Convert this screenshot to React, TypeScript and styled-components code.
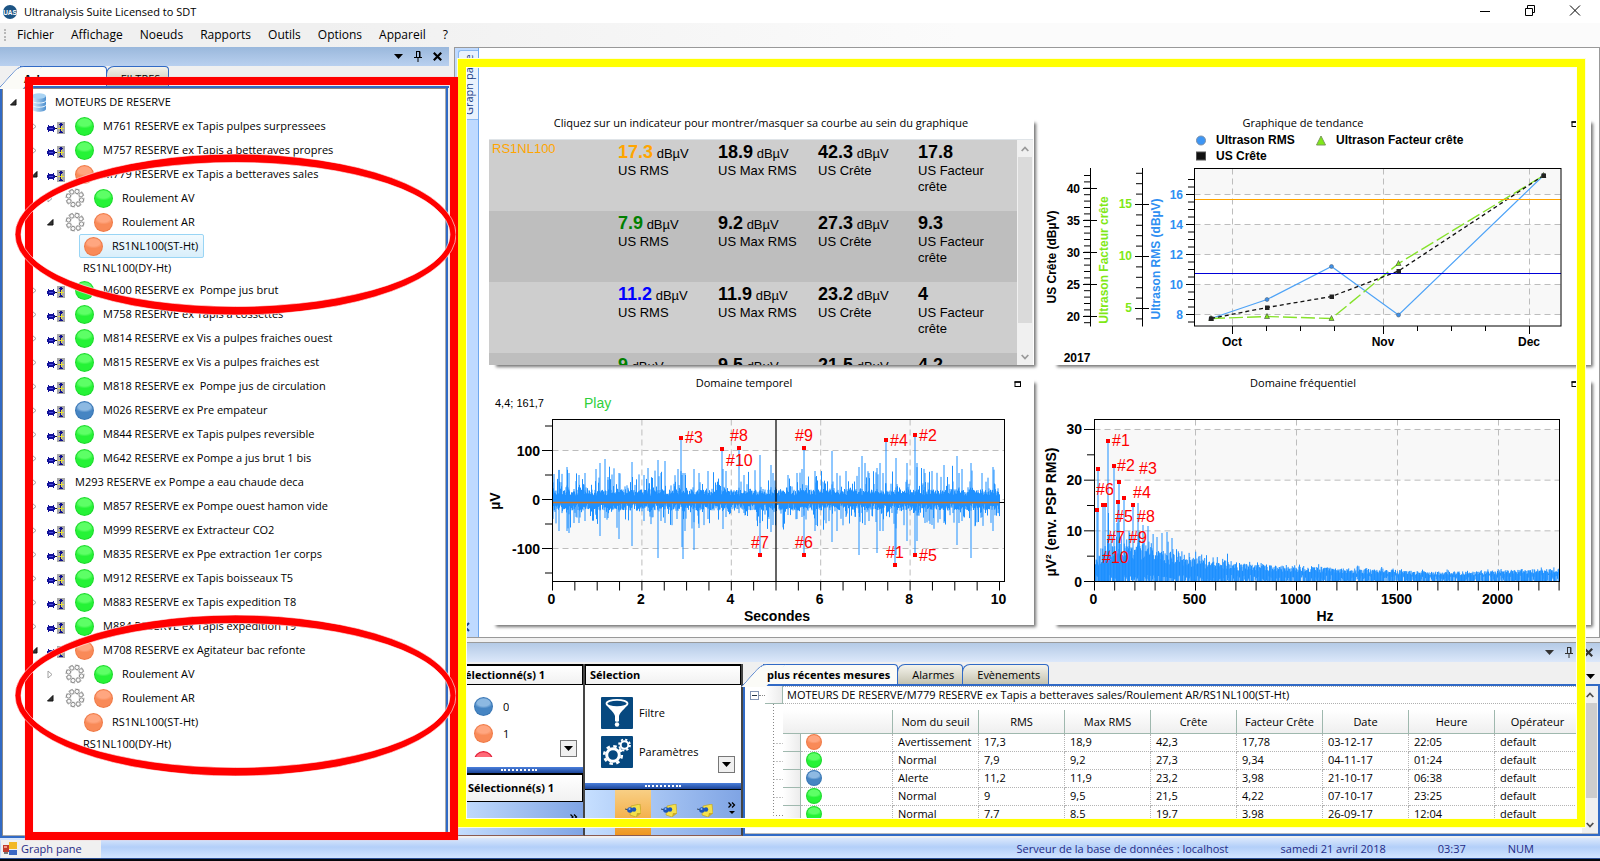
import React from "react";
import styled, { createGlobalStyle, css } from "styled-components";

const UI = '"Open Sans", "Noto Sans", Tahoma, sans-serif';
const ARIAL = '"Liberation Sans", Arial, sans-serif';
const BLUE = "#316ac5";

const Global = createGlobalStyle`
  * { box-sizing: border-box; }
  body { margin: 0; background: #f0f0f0; color: #000; font: 11px/16px ${UI}; }
  button { font: inherit; color: inherit; background: none; border: 0; padding: 0; margin: 0; text-align: left; }
  ul { list-style: none; margin: 0; padding: 0; }
  h2 { margin: 0; font-size: 11px; }
  svg { display: block; flex: none; }
`;

/* ---------- window chrome ---------- */

const Window = styled.div`
  min-height: 100vh;
  display: flex;
  flex-direction: column;
  overflow: hidden;
  border-bottom: 2px solid #05070c;
`;

const TitleBar = styled.header`
  height: 23px;
  display: flex;
  align-items: center;
  gap: 7px;
  padding: 0 19px 0 3px;
  background: #fff;
`;

const WindowButtons = styled.div`
  margin-left: auto;
  display: flex;
  gap: 33px;
  padding-bottom: 2px;
`;

const MenuBar = styled.nav`
  height: 24px;
  display: flex;
  align-items: center;
  gap: 17px;
  padding-left: 4px;
  font-size: 12px;
  background: linear-gradient(90deg, #f0f0f0 20%, #fbfbfb 60%);
`;

const Grip = styled.span`
  height: 12px;
  margin-right: -6px;
  border-left: 2px dotted #b8b8b8;
`;

const Workspace = styled.div`
  position: relative;
  flex: 1;
  display: flex;
  gap: 5px;
`;

const DockHeader = styled.div<{ $tall?: boolean }>`
  height: ${(p) => (p.$tall ? 20 : 19)}px;
  flex: none;
  display: flex;
  align-items: center;
  justify-content: flex-end;
  gap: 11px;
  padding-right: 7px;
  background: linear-gradient(#9ab8dc, #b9d0ef);
  ${(p) => p.$tall && css`
    color: #333;
    border-top: 1px solid #9a9a9a;
    background: linear-gradient(#b4cae6, #dce8fa);
  `}
`;

const Tabs = styled.div`
  flex: none;
  display: flex;
  align-items: flex-end;
  height: 22px;
  border-bottom: 2px solid ${BLUE};
  background: #f0f0f0;
`;

const DockTabs = styled(Tabs)`
  line-height: 22px;
`;

const Tab = styled.button<{ $active?: boolean }>`
  position: relative;
  height: 20px;
  padding: 1px 8px 0 14px;
  border: 1px solid ${BLUE};
  border-left-width: ${(p) => (p.$active ? 0 : 1)}px;
  border-bottom: 0;
  border-radius: 8px 4px 0 0;
  margin-left: -1px;
  white-space: nowrap;
  background: linear-gradient(#f4f3ec, #c5c3b0);
  ${(p) => p.$active && css`
    z-index: 1;
    font-weight: bold;
    margin-left: 20px;
    padding: 1px 7px 0 4px;
    border-radius: 0 4px 0 0;
    background: #fbfbf7;
    &::before {
      content: "";
      position: absolute;
      z-index: -1;
      top: -1px;
      left: -12px;
      width: 24px;
      height: 22px;
      border: solid ${BLUE};
      border-width: 1px 0 0 1px;
      border-radius: 6px 0 0 0;
      background: #fbfbf7;
      transform: skewX(-42deg);
    }
  `}
`;

/* ---------- left dock ---------- */

const LeftDock = styled.aside`
  position: relative;
  width: 449px;
  flex: none;
  display: flex;
  flex-direction: column;
`;

const TreePanel = styled.div`
  flex: 1;
  margin-right: 1px;
  border: solid ${BLUE};
  border-width: 0 2px 2px;
  background: #fff;
  box-shadow: inset 1px 1px 0 #888, inset -1px -1px 0 #aaa;
`;

const Tree = styled.ul`
  padding: 2px 1px 0 1px;
`;

type Kind = "root" | "machine" | "part" | "point" | "plain";
const indent: Record<Kind, number> = { root: 7, machine: 28, part: 44, point: 76, plain: 80 };

const TreeRow = styled.li<{ $kind: Kind }>`
  display: flex;
  align-items: center;
  gap: 9px;
  height: ${(p) => (p.$kind === "plain" ? 20 : 24)}px;
  padding-left: ${(p) => indent[p.$kind]}px;
  white-space: pre;
`;

const Toggle = styled.button<{ $wide?: number }>`
  width: ${(p) => p.$wide ?? 7}px;
  height: 10px;
`;

const PointItem = styled.span<{ $selected?: boolean }>`
  display: flex;
  align-items: center;
  gap: 9px;
  height: 24px;
  padding: 0 5px 0 4px;
  border: 1px solid transparent;
  border-radius: 2px;
  ${(p) => p.$selected && css`
    border-color: #99d5f5;
    background: linear-gradient(#f2fafe, #d9effb);
  `}
`;

type Tone = "green" | "orange" | "blue" | "red";
const tones: Record<Tone, [string, string, string]> = {
  green: ["#5dff66", "#25f336", "#1fd52e"],
  orange: ["#ffa680", "#f98a58", "#ee7a48"],
  blue: ["#8db9e2", "#4685c3", "#3a76b3"],
  red: ["#ff6a78", "#f5233e", "#d91a34"],
};

const Dot = styled.i<{ $tone: Tone; $size?: number }>`
  flex: none;
  display: block;
  width: ${(p) => p.$size ?? 19}px;
  height: ${(p) => p.$size ?? 19}px;
  border-radius: 50%;
  background: radial-gradient(ellipse 52% 30% at 50% 30%, ${(p) => tones[p.$tone][0]} 60%, transparent 100%),
    ${(p) => tones[p.$tone][1]};
  box-shadow: inset 0 0 0 1px ${(p) => tones[p.$tone][2]};
`;

/* ---------- main column ---------- */

const Main = styled.main`
  flex: 1;
  min-width: 0;
  display: flex;
  flex-direction: column;
  gap: 4px;
`;

const GraphPane = styled.section`
  flex: 1;
  display: flex;
  border: 1px solid #999;
  background: #fff;
`;

const SideStrip = styled.div`
  width: 24px;
  flex: none;
  display: flex;
  flex-direction: column;
  justify-content: space-between;
  align-items: flex-end;
  padding: 2px 0 4px;
  border-right: 1px solid #6fa8ee;
  background: #bfdaff;
`;

const SideTab = styled.button`
  width: 20px;
  height: 70px;
  border: 1px solid #8ab8f0;
  border-left: 0;
  border-radius: 0 3px 3px 0;
  background: #eaf2fd;
  color: #1b3f86;
  line-height: 18px;
  white-space: nowrap;
  writing-mode: vertical-rl;
  transform: rotate(180deg);
  text-align: center;
`;

const Collapse = styled.button`
  width: 15px;
  height: 12px;
  color: #15428b;
`;

const Cards = styled.div`
  flex: 1;
  min-width: 0;
  display: grid;
  grid-template-columns: minmax(0, 546fr) minmax(0, 542fr);
  align-content: start;
  gap: 10px 15px;
  padding: 67px 8px 12px 9px;
`;

const Card = styled.article`
  display: flex;
  flex-direction: column;
  min-width: 0;
  background: #fff;
  box-shadow: 5px 5px 3px -3px rgba(0, 0, 0, 0.55);
`;

const CardTitle = styled.header<{ $restorable?: boolean }>`
  position: relative;
  height: 18px;
  line-height: 16px;
  padding-right: ${(p) => (p.$restorable ? 34 : 0)}px;
  text-align: center;
  button { position: absolute; right: 12px; top: 6px; }
`;

const CardTools = styled.div`
  height: 20px;
  display: flex;
  align-items: center;
  gap: 40px;
  padding-left: 7px;
  font: 11px ${ARIAL};
`;

const PlayButton = styled.button`
  font-size: 14px;
  line-height: 18px;
  color: #2fcf3a;
`;

const Plot = styled.svg`
  width: 100%;
  height: auto;
  overflow: visible;
  font-family: ${ARIAL};
`;

const Indicators = styled.div`
  display: flex;
  height: 226px;
  margin: 6px 1px 0;
  border-top: 1px solid #dfe4e8;
  font: 13px/16px ${ARIAL};
`;

const IndicatorRows = styled.div`
  flex: 1;
  overflow: hidden;
`;

const IndicatorRow = styled.div<{ $shade: boolean }>`
  display: grid;
  grid-template-columns: 126px repeat(4, 100px);
  align-items: start;
  height: 71px;
  padding: 1px 3px 0;
  background: ${(p) => (p.$shade ? "#bebebe" : "#cecece")};
`;

const PointName = styled.span`
  color: #ffa500;
`;

const Indicator = styled.button<{ $color?: string }>`
  width: 84px;
  b { font-size: 18px; line-height: 22px; color: ${(p) => p.$color ?? "#000"}; }
  span { display: block; }
`;

const ScrollBar = styled.div<{ $dark?: boolean }>`
  flex: none;
  width: 16px;
  display: flex;
  flex-direction: column;
  color: ${(p) => (p.$dark ? "#505050" : "#9a9a9a")};
  background: #f0f0f0;
`;

const ScrollArrow = styled.button`
  height: 17px;
  display: grid;
  place-items: center;
`;

const ScrollTrack = styled.div`
  flex: 1;
`;

const ScrollThumb = styled.div<{ $height: string; $dark?: boolean }>`
  height: ${(p) => p.$height};
  margin: 0 1px;
  background: ${(p) => (p.$dark ? "#cdcdcd" : "#dadada")};
`;

/* ---------- bottom dock ---------- */

const BottomDock = styled.section`
  flex: none;
`;

const DockBody = styled.div`
  display: flex;
  height: 172px;
  margin: 2px 0;
`;

const NavPanel = styled.div<{ $width: number }>`
  width: ${(p) => p.$width}px;
  flex: none;
  display: flex;
  flex-direction: column;
  overflow: hidden;
  border-right: 2px solid #454545;
  border-bottom: 1px solid #8a5a50;
`;

const NavTitle = styled.h2<{ $tall?: boolean }>`
  height: ${(p) => (p.$tall ? 28 : 21)}px;
  line-height: ${(p) => (p.$tall ? 26 : 18)}px;
  flex: none;
  padding-left: ${(p) => (p.$tall ? 13 : 4)}px;
  border: 1px solid #000;
  border-top-width: ${(p) => (p.$tall ? 1 : 2)}px;
  font-weight: bold;
  white-space: nowrap;
  background: linear-gradient(#fff, #f1f1f1);
`;

const NavBody = styled.div<{ $height: number }>`
  height: ${(p) => p.$height}px;
  flex: none;
  display: flex;
  justify-content: space-between;
  align-items: flex-end;
  overflow: hidden;
  background: #fff;
`;

const CountList = styled.ul`
  align-self: flex-start;
  height: 72px;
  overflow: hidden;
  padding: 12px 0 0 20px;
  li { display: flex; align-items: center; gap: 10px; height: 19px; margin-bottom: 8px; }
`;

const ActionList = styled.ul`
  align-self: flex-start;
  padding: 12px 0 0 16px;
  li { margin-bottom: 7px; }
  button { display: flex; align-items: center; gap: 6px; }
`;

const MoreButton = styled.button`
  width: 17px;
  height: 17px;
  margin: 0 6px 10px 0;
  display: grid;
  place-items: center;
  border: 1px solid #777;
  background: #f0f0f0;
`;

const Splitter = styled.div`
  height: 7px;
  flex: none;
  display: grid;
  place-items: center;
  background: linear-gradient(#4a7fdc, #1d4598);
  border-bottom: 1px solid #000;
  &::after { content: ""; width: 36px; border-top: 2px dotted #fff; }
`;

const NavBar = styled.div`
  flex: 1;
  display: flex;
  align-items: stretch;
  justify-content: flex-end;
  background: linear-gradient(90deg, #c6dfff, #7fa4e4);
`;

const NavIcon = styled.button<{ $on?: boolean }>`
  width: 36px;
  display: flex;
  align-items: flex-start;
  padding: 14px 0 0 10px;
  ${(p) => p.$on && css`background: linear-gradient(#f8cf85, #f4b04a 65%, #ee9620);`}
`;

const NavMore = styled.button`
  width: 18px;
  display: flex;
  align-items: flex-start;
  padding: 12px 0 0 5px;
`;

const MeasurePane = styled.div`
  flex: 1;
  min-width: 0;
  display: flex;
  flex-direction: column;
  border: solid ${BLUE};
  border-width: 0 2px 2px;
  box-shadow: inset 1px 0 0 #aaa;
`;

const MeasureTabs = styled(Tabs)`
  margin: 0 -2px;
`;

const TabsMenu = styled.button`
  align-self: center;
  margin: 4px 5px 0 auto;
`;

const MeasureBody = styled.div`
  flex: 1;
  display: flex;
  background: #fff;
  border-bottom: 1px solid #bbb;
`;

const MeasureScroll = styled.div`
  flex: 1;
  overflow: hidden;
`;

const GroupRow = styled.div`
  display: flex;
  align-items: center;
  height: 18px;
  margin-left: 5px;
  white-space: nowrap;
`;

const GroupCollapse = styled.button`
  width: 9px;
  height: 9px;
  display: grid;
  place-items: center;
  border: 1px solid #8496b5;
  &::after { content: ""; width: 5px; border-top: 1px solid #234; }
`;

const Joint = styled.span`
  width: 6px;
  border-top: 1px dotted #888;
`;

const HeadCell = styled.span`
  width: 18px;
  height: 18px;
  background: linear-gradient(90deg, #fff, #ececec);
  border: solid #9fb8ae;
  border-width: 0 1px 1px 0;
`;

const GroupLabel = styled.span`
  flex: 1;
  padding-left: 4px;
  border: dotted #b0b0b0;
  border-width: 1px 0;
`;

const TableRow = styled.div`
  display: flex;
  align-items: flex-start;
  svg { margin-left: 28px; }
`;

const Table = styled.table`
  table-layout: fixed;
  width: 798px;
  margin-top: 6px;
  border-spacing: 0;
  th {
    height: 24px;
    padding: 0;
    font-weight: normal;
    border: solid #9fb8ae;
    border-width: 0 1px 1px 0;
    background: linear-gradient(#fff, #efefef);
  }
  td {
    height: 18px;
    line-height: 16px;
    padding: 0 0 1px 5px;
    border: dotted #b4b4b4;
    border-width: 0 1px 1px 0;
    overflow: hidden;
    white-space: nowrap;
  }
  td:first-child {
    border: solid #9fb8ae;
    border-width: 0 1px 1px 0;
    background: linear-gradient(90deg, #fff, #ececec);
  }
`;

/* ---------- status bar ---------- */

const StatusBar = styled.footer`
  height: 21px;
  display: flex;
  align-items: center;
  padding-top: 1px;
  color: #1f2a86;
  background: linear-gradient(#dbe8fc, #b3cff9 45%, #d2e4ff);
  border-bottom: 1px solid #2c4f96;
`;

const StatusButton = styled.button`
  width: 100px;
  height: 18px;
  margin-left: 1px;
  padding-left: 2px;
  display: flex;
  align-items: center;
  gap: 4px;
  background: #f0f0f0;
`;

const StatusInfo = styled.div`
  margin-left: auto;
  display: flex;
  white-space: nowrap;
  gap: 52px;
  padding-right: 66px;
  span:last-child { margin-left: -10px; }
`;

/* ---------- marker overlays ---------- */

const RedFrame = styled.div`
  position: absolute;
  z-index: 3;
  inset: 30px -9px -2px 25px;
  border: 8px solid #f00;
  box-shadow: 0 0 1px #faa, inset 0 0 1px #faa;
  pointer-events: none;
`;

const YellowFrame = styled.div`
  position: absolute;
  z-index: 2;
  inset: 12px 15px 11px 458px;
  border: 8px solid #ff0;
  outline: 1px solid #ffffd8;
  box-shadow: inset 0 0 0 1px #fffff0;
  pointer-events: none;
`;

const Ring = styled.svg<{ $top: number }>`
  position: absolute;
  z-index: 3;
  left: 15px;
  top: ${(p) => p.$top}px;
  pointer-events: none;
`;

function RedRing({ top }: { top: number }) {
  return (
    <Ring $top={top} width="441" height="161" viewBox="0 0 441 161">
      <path
        fill="#f00"
        stroke="#fff"
        strokeOpacity=".6"
        fillRule="evenodd"
        d="M0 80.500a220.500 80.500 0 1 0 441 0a220.500 80.500 0 1 0 -441 0zM6 80.500a214.500 72 0 1 1 429 0a214.500 72 0 1 1 -429 0z"
      />
    </Ring>
  );
}

/* ---------- icons ---------- */

const CaretDown = () => (
  <svg width="9" height="5" viewBox="0 0 9 5"><path d="M0 0h9L4.500 5z" fill="currentColor" /></svg>
);
const Pin = () => (
  <svg width="8" height="11" viewBox="0 0 8 11" fill="none" stroke="currentColor">
    <path d="M2 .5h4v5.500M2.500 .5V6M0 6.500h8M4 7v4" /><path d="M5.500 1v5" />
  </svg>
);
const Cross = () => (
  <svg width="9" height="9" viewBox="0 0 9 9" stroke="currentColor" strokeWidth="2.200"><path d="M.8.8l7.400 7.400M8.200.8L.8 8.200" /></svg>
);
const Chevron = ({ up }: { up?: boolean }) => (
  <svg width="8" height="6" viewBox="0 0 8 6" fill="none" stroke="currentColor" strokeWidth="1.800">
    <path d={up ? "M.7 5L4 1.500 7.300 5" : "M.7 1L4 4.500 7.300 1"} />
  </svg>
);
const Expanded = () => (
  <svg width="7" height="7" viewBox="0 0 7 7"><path d="M6 .5V6H.5z" fill="#333" stroke="#111" /></svg>
);
const Collapsed = () => (
  <svg width="6" height="9" viewBox="0 0 6 9"><path d="M1 1l4 3.500L1 8z" fill="#fff" stroke="#a0a0a0" /></svg>
);
const Logo = () => (
  <svg width="14" height="14" viewBox="0 0 14 14">
    <circle cx="7" cy="7" r="7" fill="#1d5484" />
    <text x="7" y="9.500" textAnchor="middle" fontSize="6.500" fontWeight="bold" fontFamily="Liberation Sans" fill="#fff">UAS</text>
  </svg>
);
const Database = () => (
  <svg width="14" height="19" viewBox="0 0 14 19">
    <defs>
      <linearGradient id="db"><stop offset="0" stopColor="#d9edfb" /><stop offset="1" stopColor="#4c8fcf" /></linearGradient>
    </defs>
    <path d="M0 3v13c0 1.600 3 2.700 7 2.700s7-1.100 7-2.700V3z" fill="url(#db)" />
    <ellipse cx="7" cy="3" rx="7" ry="2.800" fill="#a9d3f3" />
    <path d="M0 7.500c0 1.500 3 2.500 7 2.500s7-1 7-2.500M0 11.700c0 1.500 3 2.500 7 2.500s7-1 7-2.500" fill="none" stroke="#f0f8ff" />
  </svg>
);
const Motor = () => (
  <svg width="19" height="16" viewBox="0 0 19 16" shapeRendering="crispEdges">
    <path d="M1 7h1v1h4v-1h1v7h-1v-1h-4v1h-1zM0 9h8v3H0z" fill="#12129a" />
    <path d="M2 10h4" stroke="#4a4ae0" />
    <path d="M8 10.500h3" stroke="#111" />
    <rect x="10" y="4" width="8" height="12" fill="#a9a9a9" />
    <path d="M14 5v10" stroke="#11118c" strokeWidth="2" />
    <path d="M12 6h4M12 14h4" stroke="#11118c" />
    <path d="M11 10.500h6M14 8v5" stroke="#e8e03a" />
  </svg>
);
const Bearing = () => (
  <svg width="20" height="20" viewBox="0 0 20 20" fill="none">
    <circle cx="10" cy="10" r="9" stroke="#b5b5b5" strokeWidth="1.200" strokeDasharray="5 2" />
    <circle cx="10" cy="10" r="4.400" stroke="#c8c8c8" strokeDasharray="2.500 1" />
    {Array.from({ length: 8 }, (_, i) => {
      const a = (i * Math.PI) / 4 + 0.3;
      return <circle key={i} cx={10 + 6.8 * Math.cos(a)} cy={10 + 6.8 * Math.sin(a)} r="2.100" fill="#fafafa" stroke="#8c8c8c" />;
    })}
  </svg>
);
const Funnel = () => (
  <svg width="32" height="32" viewBox="0 0 32 32">
    <rect width="32" height="32" rx="1" fill="#06487f" />
    <path d="M5 6c0 4 8 8 9 13v5c0 1 4 1 4 0v-5c1-5 9-9 9-13z" fill="#fff" />
    <ellipse cx="16" cy="6.500" rx="10.500" ry="3.700" fill="#06487f" stroke="#fff" strokeWidth="1.800" />
    <circle cx="16" cy="27.500" r="2.200" fill="#fff" />
  </svg>
);
const Gears = () => (
  <svg width="32" height="32" viewBox="0 0 32 32" fill="none" stroke="#fff">
    <rect width="32" height="32" rx="1" fill="#06487f" stroke="none" />
    <circle cx="12" cy="19" r="6.300" strokeWidth="3" />
    <circle cx="12" cy="19" r="8.800" strokeWidth="2.600" strokeDasharray="3.500 3.410" />
    <circle cx="23.500" cy="9" r="3.800" strokeWidth="2" />
    <circle cx="23.500" cy="9" r="5.500" strokeWidth="1.800" strokeDasharray="2.200 2.120" />
  </svg>
);
const NotePin = () => (
  <svg width="16" height="13" viewBox="0 0 16 13">
    <path d="M6 2l9-2 1 9-5 4-6-2z" fill="#f4e04a" stroke="#b79a1e" strokeWidth=".6" />
    <path d="M11 13l1-4 4 0z" fill="#c9a92a" />
    <path d="M0 5l4 1" stroke="#345" />
    <circle cx="5" cy="6" r="2.800" fill="#1c55b8" /><circle cx="9" cy="5.500" r="2.200" fill="#1c55b8" />
    <circle cx="4.500" cy="5" r="1" fill="#8fb9ef" />
  </svg>
);
const DoubleChevron = ({ menu }: { menu?: boolean }) => (
  <svg width="8" height="12" viewBox="0 0 8 12" fill="none" stroke="#000" strokeWidth="1.300">
    <path d="M.5 .5l2.500 2.500-2.500 2.500M4 .5l2.500 2.500L4 5.500" />
    {menu && <path d="M1 9h6L4 12z" fill="#000" stroke="none" />}
  </svg>
);
const Restore = () => (
  <svg width="8" height="6" viewBox="0 0 8 6" fill="none" stroke="#000">
    <rect x="1" y="1" width="5.500" height="4.500" /><path d="M.5 1h6.500" strokeWidth="1.500" />
  </svg>
);
const GraphIcon = () => (
  <svg width="14" height="13" viewBox="0 0 14 13">
    <rect x="0" y="3" width="6" height="7" fill="#c23a2c" /><rect x="1" y="4" width="3" height="2" fill="#ef9a8a" />
    <rect x="6" y="0" width="8" height="7" fill="#f2b824" />
    <rect x="6" y="8" width="8" height="5" fill="#3b68c4" /><rect x="1" y="10" width="4" height="2" fill="#777" />
  </svg>
);

/* ---------- charts ---------- */

const range = (n: number) => Array.from({ length: n }, (_, i) => i);

function random(seed: number) {
  let s = seed;
  return () => {
    s = (s * 1664525 + 1013904223) % 4294967296;
    return s / 4294967296;
  };
}

const GRID = { stroke: "#bdbdbd", strokeDasharray: "6 4" };

function TrendChart() {
  const L = 145.5, R = 512, T = 35.5, B = 193;
  const y = (v: number) => 181.5 - (v - 8) * 15;
  const xs = [162, 218, 282.5, 349.5, 494.5];
  const rms = [185.5, 166.5, 133.5, 182, 42.5];
  const factor = [185.5, 183.5, 185.5, 130.5, 42.5];
  const peak = [185.5, 174.5, 163.5, 138, 42.5];
  const pts = (v: number[]) => v.map((p, i) => `${xs[i]},${p}`).join(" ");
  return (
    <Plot viewBox="0 0 542 232" fontSize="12" fontWeight="bold" role="img" aria-label="Graphique de tendance">
      <circle cx="152" cy="7.500" r="4.500" fill="#3d96f5" stroke="#7a8fa8" />
      <text x="167" y="11">Ultrason RMS</text>
      <path d="M267.500 12l4.500-9 4.500 9z" fill="#7fe817" stroke="#7a9a5a" />
      <text x="287" y="11">Ultrason Facteur crête</text>
      <rect x="147.500" y="19" width="9" height="8" fill="#111" stroke="#555" />
      <text x="167" y="27">US Crête</text>

      <rect x={L} y={T} width={R - L} height={B - T} fill="#fff" />
      {[[T, y(16)], [y(14), y(12)], [y(10), y(8)]].map(([a, b]) => (
        <rect key={a} x={L} y={a} width={R - L} height={b - a} fill="#f8f8f8" />
      ))}
      {[8, 10, 12, 14, 16].map((v) => <path key={v} d={`M${L} ${y(v)}H${R}`} {...GRID} />)}
      {[183.5, 334.5, 480.5].map((x) => <path key={x} d={`M${x} ${T}V${B}`} {...GRID} />)}

      <polyline points={pts(rms)} fill="none" stroke="#4ea3f7" strokeWidth="1.200" />
      <polyline points={pts(factor)} fill="none" stroke="#86e22b" strokeDasharray="14 4" strokeWidth="1.400" />
      <polyline points={pts(peak)} fill="none" stroke="#111" strokeDasharray="4 3" strokeWidth="1.300" />
      <path d={`M${L} 66.500H${R}`} stroke="#ffa500" strokeWidth="1.200" />
      <path d={`M${L} 140.500H${R}`} stroke="#0000d8" strokeWidth="1.200" />
      {xs.map((x, i) => (
        <g key={x}>
          <circle cx={x} cy={rms[i]} r="2" fill="#3d8fe8" stroke="#567" strokeWidth=".6" />
          <path d={`M${x - 2.5} ${factor[i] + 2}h5l-2.500-5z`} fill="#7fe817" stroke="#444" strokeWidth=".6" />
          <rect x={x - 2} y={peak[i] - 2} width="4.500" height="4.500" fill="#222" />
        </g>
      ))}
      <rect x={L} y={T} width={R - L} height={B - T} fill="none" stroke="#000" />

      <g stroke="#000">
        <path d="M41.500 35V193.500M93.500 35V193.500" />
        {range(24).map((i) => <path key={i} d={`M35 ${189.7 - i * 6.4}h6.500`} />)}
        {range(5).map((i) => <path key={i} d={`M34 ${183.5 - i * 32}h14`} />)}
        {range(15).map((i) => <path key={i} d={`M87 ${185.9 - i * 10.4}h6.500`} />)}
        {range(3).map((i) => <path key={i} d={`M86 ${175.5 - i * 52}h14`} />)}
        {range(20).map((i) => <path key={i} d={`M139 ${189 - i * 7.5}h6.500`} />)}
        {[8, 10, 12, 14, 16].map((v) => <path key={v} d={`M137 ${y(v)}h8`} />)}
        {[218, 252, 286, 369, 403, 437].map((x) => <path key={x} d={`M${x - 0.5} 193v5`} />)}
        {[183.5, 334.5, 480.5].map((x) => <path key={x} d={`M${x} 193v8`} />)}
      </g>
      <g textAnchor="end">
        {range(5).map((i) => <text key={i} x="31" y={188 - i * 32}>{20 + i * 5}</text>)}
        <g fill="#7fe817">{range(3).map((i) => <text key={i} x="83" y={179 - i * 52}>{5 + i * 5}</text>)}</g>
        <g fill="#2f8ff2">{[8, 10, 12, 14, 16].map((v) => <text key={v} x="134" y={y(v) + 4}>{v}</text>)}</g>
      </g>
      <g textAnchor="middle">
        <text transform="translate(7 124) rotate(-90)">US Crête (dBµV)</text>
        <text transform="translate(59 127) rotate(-90)" fill="#7fe817">Ultrason Facteur crête</text>
        <text transform="translate(111 126) rotate(-90)" fill="#2f8ff2">Ultrason RMS (dBµV)</text>
        <text x="183" y="213">Oct</text>
        <text x="334" y="213">Nov</text>
        <text x="480" y="213">Dec</text>
        <text x="28" y="229">2017</text>
      </g>
    </Plot>
  );
}

type Peak = { n: number; x: number; y: number; lx: number; ly: number };

const Marks = ({ peaks }: { peaks: Peak[] }) => (
  <g fill="#f00">
    {peaks.map((p) => (
      <g key={p.n}>
        <rect x={p.x - 2} y={p.y - 2} width="4" height="4" />
        <text x={p.lx} y={p.ly + 6} fontSize="16" fontWeight="normal">#{p.n}</text>
      </g>
    ))}
  </g>
);

const timePeaks: Peak[] = [
  { n: 3, x: 193, y: 25, lx: 197, ly: 24 },
  { n: 10, x: 234, y: 36, lx: 238, ly: 47 },
  { n: 8, x: 251, y: 35, lx: 242, ly: 22 },
  { n: 9, x: 316, y: 35, lx: 307, ly: 22 },
  { n: 4, x: 398, y: 27, lx: 402, ly: 27 },
  { n: 2, x: 427, y: 22, lx: 431, ly: 22 },
  { n: 7, x: 272, y: 142, lx: 263, ly: 129 },
  { n: 6, x: 316, y: 142, lx: 307, ly: 129 },
  { n: 1, x: 407, y: 152, lx: 398, ly: 139 },
  { n: 5, x: 427, y: 142, lx: 431, ly: 142 },
];

const timeWave = (() => {
  const r = random(7);
  let d = "";
  for (let x = 65; x < 512; x += 0.5) {
    const up = 4 + r() * 6 + Math.pow(r(), 8) * 24;
    const down = 4 + r() * 7 + Math.pow(r(), 9) * 22;
    d += `M${x} ${(86.5 - up).toFixed(1)}V${(86.5 + down).toFixed(1)}`;
  }
  const tall: [number, number, number][] = [
    [71, 57, 118], [79, 54, 118], [81, 60, 120], [86, 76, 110], [97, 60, 108], [108, 56, 102], [112, 50, 123], [117, 46, 105], [131, 60, 126],
    [156, 62, 108], [194, 62, 134], [206, 56, 137], [211, 60, 115], [235, 56, 116], [256, 62, 100], [272, 42, 110], [283, 52, 119],
    [144, 49, 133], [170, 47, 145], [173, 60, 108], [177, 48, 110], [190, 56, 98], [195, 60, 146], [197, 60, 118], [238, 58, 104],
    [327, 58, 118], [344, 38, 129], [349, 60, 118], [314, 56, 104], [309, 60, 106], [328, 64, 112], [371, 54, 142], [374, 43, 100],
    [389, 55, 140], [392, 50, 118], [358, 58, 104], [377, 50, 112], [381, 60, 108], [395, 60, 118], [408, 45, 142], [429, 50, 128],
    [437, 60, 110], [444, 58, 112], [456, 52, 110], [469, 43, 132], [471, 60, 110], [474, 56, 108], [483, 50, 145], [505, 54, 118],
    [494, 60, 104], [220, 58, 106], [285, 60, 112], [300, 62, 102], [419, 50, 128], [160, 55, 98], [91, 62, 110], [120, 64, 105],
  ];
  tall.forEach(([x, a, b]) => { d += `M${x} ${a}V${b}`; });
  timePeaks.forEach((p) => { d += `M${p.x} ${p.y}V86`; });
  return d;
})();

function TimeChart() {
  const L = 64.5, R = 516.5, T = 6.5, B = 168.5;
  const y = (v: number) => 86.5 - v * 0.49;
  const x = (s: number) => L + s * 44.7;
  return (
    <Plot viewBox="0 0 546 212" fontSize="14" fontWeight="bold" role="img" aria-label="Domaine temporel">
      <rect x={L} y={T} width={R - L} height={y(100) - T} fill="#f8f8f8" />
      <rect x={L} y={y(0)} width={R - L} height={49} fill="#f8f8f8" />
      {[100, 0, -100].map((v) => <path key={v} d={`M${L} ${y(v)}H${R}`} {...GRID} />)}
      {[2, 4, 6, 8].map((s) => <path key={s} d={`M${x(s)} ${T}V${B}`} {...GRID} />)}
      <path d={timeWave} stroke="#1e90ff" />
      <path d={`M${L} 89.500H${R}M${x(5)} ${T}V${B}`} stroke="#000" strokeWidth="1.200" />
      <path d={`M${L} 89.500H${x(10)}`} stroke="#d2741e" strokeWidth="1.500" />
      <rect x={L} y={T} width={R - L} height={B - T} fill="none" stroke="#000" />
      <g stroke="#000">
        {range(21).map((i) => <path key={i} d={`M${x(i / 2)} ${B}v9`} />)}
        {[150, 50, -50, -150].map((v) => <path key={v} d={`M57 ${y(v)}h7`} />)}
        {[100, 0, -100].map((v) => <path key={v} d={`M54 ${y(v)}h10`} />)}
      </g>
      <g textAnchor="end">{[100, 0, -100].map((v) => <text key={v} x="52" y={y(v) + 5}>{v}</text>)}</g>
      <g textAnchor="middle">
        {range(6).map((i) => <text key={i} x={x(i * 2) - 1} y="191">{i * 2}</text>)}
        <text x="289" y="208">Secondes</text>
        <text transform="translate(12 88) rotate(-90)">µV</text>
      </g>
      <Marks peaks={timePeaks} />
    </Plot>
  );
}

const freqPeaks: Peak[] = [
  { n: 1, x: 59, y: 28, lx: 63, ly: 27 },
  { n: 2, x: 65, y: 53, lx: 68, ly: 52 },
  { n: 3, x: 70, y: 69, lx: 90, ly: 55 },
  { n: 4, x: 75, y: 85, lx: 84, ly: 79 },
  { n: 6, x: 49, y: 56, lx: 47, ly: 76 },
  { n: 5, x: 69, y: 89, lx: 66, ly: 103 },
  { n: 8, x: 84, y: 92, lx: 88, ly: 103 },
  { n: 7, x: 54, y: 92, lx: 58, ly: 124 },
  { n: 9, x: 56, y: 92, lx: 80, ly: 124 },
  { n: 10, x: 48, y: 97, lx: 53, ly: 144 },
];

const freqWave = (() => {
  const r = random(23);
  const env: [number, number][] = [[0, 5], [60, 8], [150, 8], [250, 8.5], [400, 6], [500, 5], [650, 4.2], [900, 3.6], [1300, 2.9], [1700, 2.1], [1900, 2.3], [2300, 3]];
  const at = (f: number) => {
    const i = Math.max(1, env.findIndex(([e]) => e >= f));
    const [a, va] = env[i - 1], [b, vb] = env[i];
    return va + ((f - a) / (b - a)) * (vb - va);
  };
  let d = "";
  for (let x = 46.5; x < 510; x += 0.6) {
    const f = ((x - 45.5) / 465) * 2300;
    const spike = f < 700 ? Math.pow(r(), 4) * 0.5 : Math.pow(r(), 6) * 0.25;
    const h = at(f) * (0.5 + r() * 0.35 + spike) * 5.07;
    d += `M${x.toFixed(1)} ${(168 - h).toFixed(1)}V${(168 - (r() < 0.3 ? r() * 6 : 0)).toFixed(1)}`;
  }
  freqPeaks.forEach((p) => { d += `M${p.x} ${p.y}V168`; });
  [[68, 110], [80, 118], [89, 90], [94, 112], [99, 113], [108, 124], [113, 120], [118, 119], [123, 125], [59.5, 100]].forEach(([x, y]) => { d += `M${x} ${y}V168`; });
  return d;
})();

function FrequencyChart() {
  const L = 45.5, R = 510.5, T = 6.5, B = 168.5;
  const y = (v: number) => B - v * 5.067;
  const x = (f: number) => L + f * 0.202;
  return (
    <Plot viewBox="0 0 542 212" fontSize="14" fontWeight="bold" role="img" aria-label="Domaine fréquentiel">
      <rect x={L} y={y(30)} width={R - L} height={y(20) - y(30)} fill="#f8f8f8" />
      <rect x={L} y={y(10)} width={R - L} height={B - y(10)} fill="#f8f8f8" />
      {[10, 20, 30].map((v) => <path key={v} d={`M${L} ${y(v)}H${R}`} {...GRID} />)}
      {[500, 1000, 1500, 2000].map((f) => <path key={f} d={`M${x(f)} ${T}V${B}`} {...GRID} />)}
      <path d={freqWave} stroke="#1e90ff" />
      <rect x={L} y={T} width={R - L} height={B - T} fill="none" stroke="#000" />
      <g stroke="#000">
        {range(24).map((i) => <path key={i} d={`M${x(i * 100)} ${B}v9`} />)}
        {[5, 15, 25].map((v) => <path key={v} d={`M38 ${y(v)}h7`} />)}
        {[0, 10, 20, 30].map((v) => <path key={v} d={`M35 ${y(v)}h10`} />)}
      </g>
      <g textAnchor="end">{[0, 10, 20, 30].map((v) => <text key={v} x="33" y={y(v) + 5}>{v}</text>)}</g>
      <g textAnchor="middle">
        {range(5).map((i) => <text key={i} x={x(i * 500) - 1} y="191">{i * 500}</text>)}
        <text x="276" y="208">Hz</text>
        <text transform="translate(7 99) rotate(-90)">µV² (env. PSP RMS)</text>
      </g>
      <Marks peaks={freqPeaks} />
    </Plot>
  );
}

/* ---------- data ---------- */

type Node = { kind: Kind; label: string; tone?: Tone; open?: boolean; selected?: boolean };
const machine = (label: string, tone?: Tone, open?: boolean): Node => ({ kind: "machine", label, tone, open });

const points = (selected: boolean): Node[] => [
  { kind: "part", label: "Roulement AV", tone: "green" },
  { kind: "part", label: "Roulement AR", tone: "orange", open: true },
  { kind: "point", label: "RS1NL100(ST-Ht)", tone: "orange", selected },
  { kind: "plain", label: "RS1NL100(DY-Ht)" },
];

const nodes: Node[] = [
  { kind: "root", label: "MOTEURS DE RESERVE", open: true },
  machine("M761 RESERVE ex Tapis pulpes surpressees", "green"),
  machine("M757 RESERVE ex Tapis a betteraves propres", "green"),
  machine("M779 RESERVE ex Tapis a betteraves sales", "orange", true),
  ...points(true),
  machine("M600 RESERVE ex  Pompe jus brut", "green"),
  machine("M758 RESERVE ex Tapis a cossettes", "green"),
  machine("M814 RESERVE ex Vis a pulpes fraiches ouest", "green"),
  machine("M815 RESERVE ex Vis a pulpes fraiches est", "green"),
  machine("M818 RESERVE ex  Pompe jus de circulation", "green"),
  machine("M026 RESERVE ex Pre empateur", "blue"),
  machine("M844 RESERVE ex Tapis pulpes reversible", "green"),
  machine("M642 RESERVE ex Pompe a jus brut 1 bis", "green"),
  machine("M293 RESERVE ex Pompe a eau chaude deca"),
  machine("M857 RESERVE ex Pompe ouest hamon vide", "green"),
  machine("M999 RESERVE ex Extracteur CO2", "green"),
  machine("M835 RESERVE ex Ppe extraction 1er corps", "green"),
  machine("M912 RESERVE ex Tapis boisseaux T5", "green"),
  machine("M883 RESERVE ex Tapis expedition T8", "green"),
  machine("M884 RESERVE ex Tapis expedition T9", "green"),
  machine("M708 RESERVE ex Agitateur bac refonte", "orange", true),
  ...points(false),
];

const indicators = [
  { name: "RS1NL100", color: "#ffa500", values: ["17.3", "18.9", "42.3", "17.8"] },
  { name: "", color: "#008000", values: ["7.9", "9.2", "27.3", "9.3"] },
  { name: "", color: "#0000ff", values: ["11.2", "11.9", "23.2", "4"] },
  { name: "", color: "#008000", values: ["9", "9.5", "21.5", "4.2"] },
];
const indicatorNames = ["US RMS", "US Max RMS", "US Crête", "US Facteur crête"];

const columns = ["Nom du seuil", "RMS", "Max RMS", "Crête", "Facteur Crête", "Date", "Heure", "Opérateur"];
const measures: [Tone, ...string[]][] = [
  ["orange", "Avertissement", "17,3", "18,9", "42,3", "17,78", "03-12-17", "22:05", "default"],
  ["green", "Normal", "7,9", "9,2", "27,3", "9,34", "04-11-17", "01:24", "default"],
  ["blue", "Alerte", "11,2", "11,9", "23,2", "3,98", "21-10-17", "06:38", "default"],
  ["green", "Normal", "9", "9,5", "21,5", "4,22", "07-10-17", "23:25", "default"],
  ["green", "Normal", "7,7", "8,5", "19,7", "3,98", "26-09-17", "12:04", "default"],
];

/* ---------- parts ---------- */

function TreeNode({ node }: { node: Node }) {
  const { kind, label, tone, open, selected } = node;
  if (kind === "plain") return <TreeRow $kind={kind}>{label}</TreeRow>;
  if (kind === "point")
    return (
      <TreeRow $kind={kind}>
        <PointItem $selected={selected}><Dot $tone={tone!} />{label}</PointItem>
      </TreeRow>
    );
  return (
    <TreeRow $kind={kind}>
      <Toggle $wide={kind === "root" ? 13 : kind === "part" ? 9 : 7} aria-label={label} aria-expanded={!!open}>
        {open ? <Expanded /> : <Collapsed />}
      </Toggle>
      {kind === "root" ? <Database /> : kind === "part" ? <Bearing /> : <Motor />}
      {tone && <Dot $tone={tone} />}
      <span>{label}</span>
    </TreeRow>
  );
}

const DockButtons = () => (
  <>
    <button aria-label="Menu"><CaretDown /></button>
    <button aria-label="Épingler"><Pin /></button>
    <button aria-label="Fermer"><Cross /></button>
  </>
);

const RestoreButton = () => <button aria-label="Agrandir"><Restore /></button>;

export default function App() {
  return (
    <Window>
      <Global />
      <TitleBar>
        <Logo />
        <span>Ultranalysis Suite Licensed to SDT</span>
        <WindowButtons>
          <button aria-label="Réduire">
            <svg width="12" height="11" viewBox="0 0 12 11"><path d="M1 6.500h10" stroke="#000" /></svg>
          </button>
          <button aria-label="Restaurer">
            <svg width="12" height="11" viewBox="0 0 12 11" fill="none" stroke="#000">
              <path d="M1.500 3.500h7v7h-7zM3.500 3V.5h7v7H9" />
            </svg>
          </button>
          <button aria-label="Fermer la fenêtre">
            <svg width="12" height="11" viewBox="0 0 12 11"><path d="M1 .5l10 10M11 .5L1 10.500" stroke="#000" /></svg>
          </button>
        </WindowButtons>
      </TitleBar>
      <MenuBar>
        <Grip />
        {["Fichier", "Affichage", "Noeuds", "Rapports", "Outils", "Options", "Appareil", "?"].map((m) => (
          <button key={m}>{m}</button>
        ))}
      </MenuBar>

      <Workspace>
        <LeftDock>
          <DockHeader><DockButtons /></DockHeader>
          <DockTabs>
            <Tab $active>Arborescence</Tab>
            <Tab>FILTRES</Tab>
          </DockTabs>
          <TreePanel>
            <Tree>{nodes.map((n, i) => <TreeNode key={i} node={n} />)}</Tree>
          </TreePanel>
          <RedFrame />
          <RedRing top={107} />
          <RedRing top={568} />
        </LeftDock>

        <Main>
          <GraphPane>
            <SideStrip>
              <SideTab>Graph pane</SideTab>
              <Collapse aria-label="Replier">
                <svg width="8" height="10" viewBox="0 0 8 10"><path d="M6 1L2 5l4 4" fill="none" stroke="currentColor" strokeWidth="2" /></svg>
              </Collapse>
            </SideStrip>
            <Cards>
              <Card>
                <CardTitle>Cliquez sur un indicateur pour montrer/masquer sa courbe au sein du graphique</CardTitle>
                <Indicators>
                  <IndicatorRows>
                    {indicators.map((row, i) => (
                      <IndicatorRow key={i} $shade={i % 2 === 1}>
                        <PointName>{row.name}</PointName>
                        {row.values.map((v, c) => (
                          <Indicator key={c} $color={c === 0 ? row.color : undefined}>
                            <b>{v}</b>{c < 3 && " dBµV"}
                            <span>{indicatorNames[c]}</span>
                          </Indicator>
                        ))}
                      </IndicatorRow>
                    ))}
                  </IndicatorRows>
                  <ScrollBar>
                    <ScrollArrow aria-label="Monter"><Chevron up /></ScrollArrow>
                    <ScrollTrack><ScrollThumb $height="87%" /></ScrollTrack>
                    <ScrollArrow aria-label="Descendre"><Chevron /></ScrollArrow>
                  </ScrollBar>
                </Indicators>
              </Card>
              <Card>
                <CardTitle $restorable>Graphique de tendance<RestoreButton /></CardTitle>
                <TrendChart />
              </Card>
              <Card>
                <CardTitle $restorable>Domaine temporel<RestoreButton /></CardTitle>
                <CardTools>
                  <span>4,4; 161,7</span>
                  <PlayButton>Play</PlayButton>
                </CardTools>
                <TimeChart />
              </Card>
              <Card>
                <CardTitle $restorable>Domaine fréquentiel<RestoreButton /></CardTitle>
                <CardTools />
                <FrequencyChart />
              </Card>
            </Cards>
          </GraphPane>

          <BottomDock>
            <DockHeader $tall><DockButtons /></DockHeader>
            <DockBody>
              <NavPanel $width={131}>
                <NavTitle>Sélectionné(s) 1</NavTitle>
                <NavBody $height={82}>
                  <CountList>
                    <li><Dot $tone="blue" />0</li>
                    <li><Dot $tone="orange" />1</li>
                    <li><Dot $tone="red" /></li>
                  </CountList>
                  <MoreButton aria-label="Plus"><CaretDown /></MoreButton>
                </NavBody>
                <Splitter />
                <NavTitle $tall>Sélectionné(s) 1</NavTitle>
                <NavBar><NavMore aria-label="Options de la barre"><DoubleChevron /></NavMore></NavBar>
              </NavPanel>
              <NavPanel $width={158}>
                <NavTitle>Sélection</NavTitle>
                <NavBody $height={98}>
                  <ActionList>
                    <li><button><Funnel />Filtre</button></li>
                    <li><button><Gears />Paramètres</button></li>
                  </ActionList>
                  <MoreButton aria-label="Plus"><CaretDown /></MoreButton>
                </NavBody>
                <Splitter />
                <NavBar>
                  <NavIcon $on aria-label="Sélection"><NotePin /></NavIcon>
                  <NavIcon aria-label="Note"><NotePin /></NavIcon>
                  <NavIcon aria-label="Note suivante"><NotePin /></NavIcon>
                  <NavMore aria-label="Options de la barre"><DoubleChevron menu /></NavMore>
                </NavBar>
              </NavPanel>
              <MeasurePane>
                <MeasureTabs>
                  <Tab $active>plus récentes mesures</Tab>
                  <Tab>Alarmes</Tab>
                  <Tab>Evènements</Tab>
                  <TabsMenu aria-label="Liste des onglets"><CaretDown /></TabsMenu>
                </MeasureTabs>
                <MeasureBody>
                  <MeasureScroll>
                    <GroupRow>
                      <GroupCollapse aria-label="Replier le groupe" />
                      <Joint />
                      <HeadCell />
                      <GroupLabel>MOTEURS DE RESERVE/M779 RESERVE ex Tapis a betteraves sales/Roulement AR/RS1NL100(ST-Ht)</GroupLabel>
                    </GroupRow>
                    <TableRow>
                      <svg width="10" height="112" viewBox="0 0 10 112" fill="none" stroke="#888" strokeDasharray="1 2">
                        <path d="M.5 0V111.500H10M.5 39.500H10M.5 57.500H10M.5 75.500H10M.5 93.500H10" />
                      </svg>
                      <Table>
                        <colgroup>
                          <col width="18" /><col width="92" />
                          {columns.map((c) => <col key={c} width="86" />)}
                        </colgroup>
                        <thead>
                          <tr>
                            <th colSpan={2} />
                            {columns.map((c) => <th key={c}>{c}</th>)}
                          </tr>
                        </thead>
                        <tbody>
                          {measures.map(([tone, ...cells], i) => (
                            <tr key={i}>
                              <td />
                              <td><Dot $tone={tone} $size={16} /></td>
                              {cells.map((c, k) => <td key={k}>{c}</td>)}
                            </tr>
                          ))}
                        </tbody>
                      </Table>
                    </TableRow>
                  </MeasureScroll>
                  <ScrollBar $dark>
                    <ScrollArrow aria-label="Monter"><Chevron up /></ScrollArrow>
                    <ScrollTrack><ScrollThumb $height="84%" $dark /></ScrollTrack>
                    <ScrollArrow aria-label="Descendre"><Chevron /></ScrollArrow>
                  </ScrollBar>
                </MeasureBody>
              </MeasurePane>
            </DockBody>
          </BottomDock>
        </Main>
        <YellowFrame />
      </Workspace>

      <StatusBar>
        <StatusButton><GraphIcon />Graph pane</StatusButton>
        <StatusInfo>
          <span>Serveur de la base de données : localhost</span>
          <span>samedi 21 avril 2018</span>
          <span>03:37</span>
          <span>NUM</span>
        </StatusInfo>
      </StatusBar>
    </Window>
  );
}
